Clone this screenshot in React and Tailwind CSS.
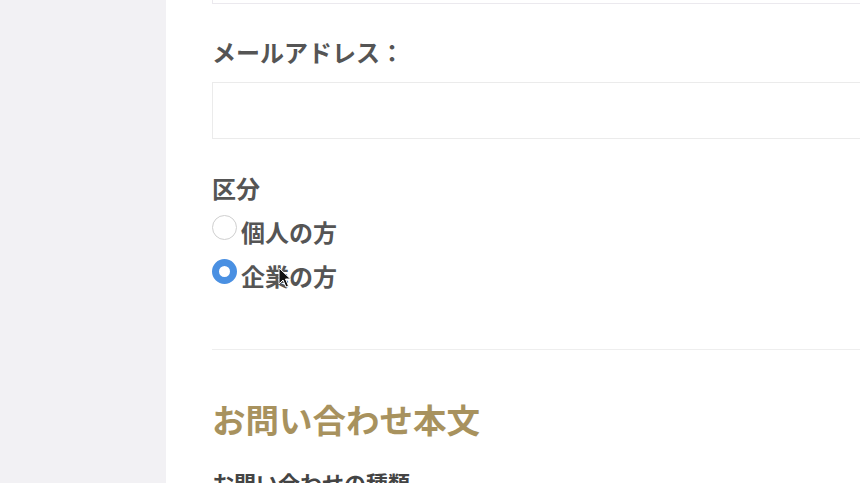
import React from "react";

const Radio = ({ label, checked }) => (
  <label className="flex items-start gap-[4px]">
    <input
      type="radio"
      name="kubun"
      defaultChecked={checked}
      className="appearance-none mt-[-1px] w-[25px] h-[25px] rounded-full border-[1.5px] border-[#cfcfcf] bg-white checked:border-[7px] checked:border-[#4a90e2]"
    />
    <span className="text-[24px] leading-[32px] font-bold text-[#555]">{label}</span>
  </label>
);

const App = () => {
  return (
    <div className="flex h-[483px] w-[860px] overflow-hidden bg-white font-['Noto_Sans_CJK_JP',sans-serif]">
      {/* sidebar */}
      <aside className="w-[166px] shrink-0 bg-[#f2f1f4]" />

      <main className="relative flex-1 pl-[46px] overflow-hidden">
        {/* previous input, scrolled off */}
        <div className="h-[4px] w-[700px] border-x border-b border-[#ebe9ee]" />

        <p className="mt-[33px] text-[24px] leading-[30px] font-bold text-[#555]">メールアドレス：</p>
        <input
          type="email"
          className="mt-[15px] block h-[57px] w-[700px] border border-[#ebebeb] bg-white outline-none"
        />

        <p className="mt-[34px] text-[24px] leading-[30px] font-bold text-[#555]">区分</p>
        <div className="mt-[13px] flex flex-col gap-[12px]">
          <Radio label="個人の方" />
          <Radio label="企業の方" checked />
        </div>

        <hr className="mt-[57px] w-[700px] border-t border-[#eeeeee]" />

        <h2 className="mt-[49px] text-[33.5px] leading-[40px] font-bold text-[#a8925e]">お問い合わせ本文</h2>
        <p className="mt-[28px] text-[22px] leading-[30px] font-bold text-[#444]">お問い合わせの種類</p>

        {/* mouse pointer */}
        <svg className="absolute left-[112px] top-[267px]" width="13" height="22" viewBox="0 0 13 22">
          <path d="M1 1 L1 17 L5 13 L8 20 L10.5 19 L7.5 12 L12.5 12 Z" fill="#111" stroke="#fff" strokeWidth="1" />
        </svg>
      </main>
    </div>
  );
};

export default App;
